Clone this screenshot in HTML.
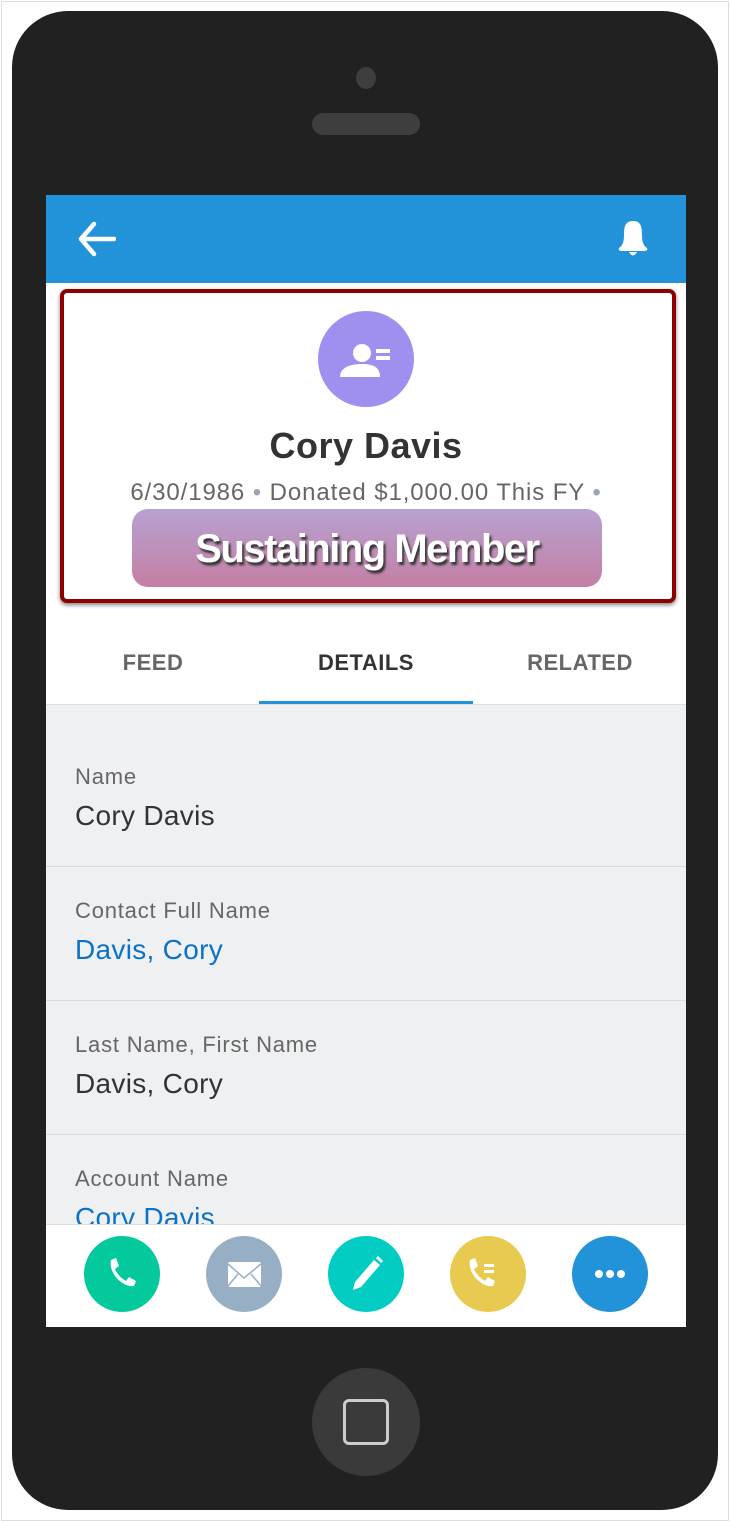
<!DOCTYPE html>
<html><head><style>
*{margin:0;padding:0;box-sizing:border-box}
body{width:730px;height:1522px;background:#fff;position:relative;overflow:hidden;font-family:"Liberation Sans",sans-serif}
.frame{position:absolute;left:1px;top:1px;width:728px;height:1520px;border:1px solid #ddd}
.phone{position:absolute;left:12px;top:11px;width:706px;height:1499px;background:#212121;border-radius:56px}
.screen{position:absolute;left:46px;top:195px;width:640px;height:1132px;background:#fff;overflow:hidden}
.hdr{position:absolute;left:0;top:0;width:640px;height:88px;background:#2293d8}
.card{position:absolute;left:14px;top:94px;width:616px;height:314px;border:4px solid #8e0000;border-radius:7px;box-shadow:0 2px 4px rgba(0,0,0,.5);background:#fff}
.av{position:absolute;left:272px;top:116px;width:96px;height:96px;border-radius:50%;background:#9f8fef}
.name{position:absolute;left:0;width:640px;top:230px;text-align:center;font-size:36px;font-weight:bold;color:#333;letter-spacing:.5px}
.sub{position:absolute;left:0;width:640px;top:284px;text-align:center;font-size:24px;color:#666;letter-spacing:.9px}
.sub b{color:#9aa5b1;font-weight:normal}
.badge{position:absolute;left:86px;top:314px;width:470px;height:78px;border-radius:16px;background:linear-gradient(#b7a2d2,#c47ea3);text-align:center;font-size:40px;font-weight:bold;color:#fff;line-height:80px;text-shadow:2px 3px 2px #333;letter-spacing:-1.5px}
.tab{position:absolute;top:455px;font-size:22px;font-weight:bold;color:#666;width:214px;text-align:center;letter-spacing:.5px}
.ul{position:absolute;left:213px;top:506px;width:214px;height:3px;background:#2293d8}
.list{position:absolute;left:0;top:509px;width:640px;height:520px;background:#eff0f2;border-top:1px solid #ddd}
.row{position:absolute;left:0;width:640px;border-bottom:1px solid #d8dadd}
.lab{position:absolute;left:29px;font-size:22px;color:#666;letter-spacing:.8px}
.val{position:absolute;left:29px;font-size:28px;color:#333;letter-spacing:.3px}
.lnk{color:#0b72c7}
.bar{position:absolute;left:0;top:1029px;width:640px;height:103px;background:#fff;border-top:1px solid #ddd}
.btn{position:absolute;top:1041px;width:76px;height:76px;border-radius:50%}
.home{position:absolute;left:312px;top:1368px;width:108px;height:108px;border-radius:50%;background:#3a3a3a}
</style></head><body>
<div class="frame"></div>
<div class="phone"></div>
<div style="position:absolute;left:356px;top:67px;width:20px;height:22px;border-radius:50%;background:#3e3e3e"></div>
<div style="position:absolute;left:312px;top:113px;width:108px;height:22px;border-radius:11px;background:#3e3e3e"></div>
<div class="home"></div>
<div style="position:absolute;left:343px;top:1399px;width:46px;height:46px;border:3px solid #ccc;border-radius:6px"></div>
<div class="screen">
<div class="hdr">
<svg style="position:absolute;left:30px;top:26px" width="40" height="36" viewBox="0 0 40 36"><path d="M18 3 L5 18 L18 33 M5 18 H38" stroke="#fff" stroke-width="4.5" fill="none" stroke-linecap="round" stroke-linejoin="round"/></svg>
<svg style="position:absolute;left:568px;top:24px" width="38" height="40" viewBox="0 0 38 40"><path d="M19 2 C11 2 10 8 10 16 C10 24 8 27 5 29 C4 31 6 32 8 32 H30 C32 32 34 31 33 29 C30 27 28 24 28 16 C28 8 27 2 19 2Z M15 33 Q19 40 23 33Z" fill="#fff"/></svg>
</div>
<div class="card"></div>
<div class="av"><svg width="96" height="96" viewBox="0 0 96 96"><circle cx="44" cy="42" r="9" fill="#fff"/><path d="M22 66 C22 56 33 53 44 53 C55 53 62 56 62 66Z" fill="#fff"/><rect x="58" y="38" width="14" height="4" fill="#fff"/><rect x="58" y="45" width="14" height="4" fill="#fff"/></svg></div>
<div class="name">Cory Davis</div>
<div class="sub">6/30/1986 <b>•</b> Donated $1,000.00 This FY <b>•</b></div>
<div class="badge">Sustaining Member</div>
<div class="tab" style="left:0">FEED</div>
<div class="tab" style="left:213px;color:#333">DETAILS</div>
<div class="tab" style="left:427px">RELATED</div>
<div class="ul"></div>
<div class="list">
<div class="row" style="top:0;height:162px"><div class="lab" style="top:59px">Name</div><div class="val" style="top:95px">Cory Davis</div></div>
<div class="row" style="top:162px;height:134px"><div class="lab" style="top:31px">Contact Full Name</div><div class="val lnk" style="top:67px">Davis, Cory</div></div>
<div class="row" style="top:296px;height:134px"><div class="lab" style="top:31px">Last Name, First Name</div><div class="val" style="top:67px">Davis, Cory</div></div>
<div class="row" style="top:430px;height:134px;border:0"><div class="lab" style="top:31px">Account Name</div><div class="val lnk" style="top:67px">Cory Davis</div></div>
</div>
<div class="bar"></div>
<div class="btn" style="left:38px;background:#04c99c"><svg width="76" height="76" viewBox="0 0 76 76"><path d="M27 24 L32 22 L35 30 L31 33 C33 38 37 42 42 45 L45 41 L52 45 L50 50 C40 52 24 38 27 24Z" fill="#fff"/></svg></div>
<div class="btn" style="left:160px;background:#97afc4"><svg width="76" height="76" viewBox="0 0 76 76"><rect x="22" y="26" width="33" height="25" rx="2" fill="#fff"/><path d="M22 28 L38 42 L55 28 M22 50 L32 38 M55 50 L45 38" stroke="#97afc4" stroke-width="1.5" fill="none"/></svg></div>
<div class="btn" style="left:282px;background:#03ccc2"><svg width="76" height="76" viewBox="0 0 76 76"><path d="M25 54 L27 46 L46 24 L52 29 L33 51Z M48 22 L50 20 L55 25 L53 27Z" fill="#fff"/></svg></div>
<div class="btn" style="left:404px;background:#e9ca50"><svg width="76" height="76" viewBox="0 0 76 76"><path d="M20 24 L25 22 L28 30 L24 33 C26 38 30 42 35 45 L38 41 L45 45 L43 50 C33 52 17 38 20 24Z" fill="#fff"/><rect x="34" y="28" width="10" height="3" fill="#fff"/><rect x="34" y="34" width="10" height="3" fill="#fff"/></svg></div>
<div class="btn" style="left:526px;background:#2293d8"><svg width="76" height="76" viewBox="0 0 76 76"><circle cx="27" cy="38" r="4" fill="#fff"/><circle cx="38" cy="38" r="4" fill="#fff"/><circle cx="49" cy="38" r="4" fill="#fff"/></svg></div>
</div>
</body></html>
